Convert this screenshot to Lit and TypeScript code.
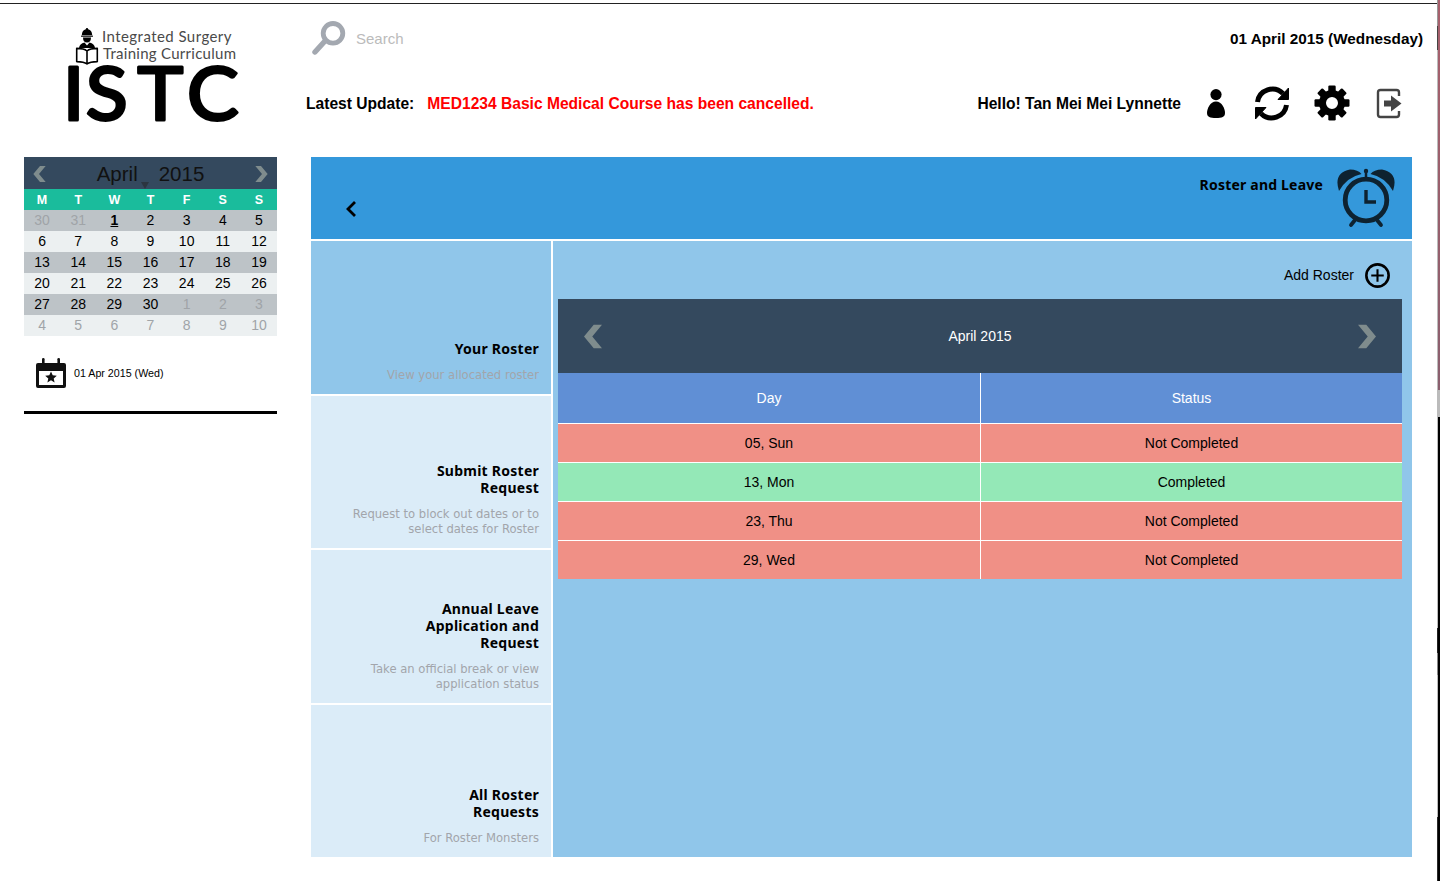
import { LitElement, html, svg, css } from 'lit';
import { customElement } from 'lit/decorators.js';

interface MenuItem {
  title: string[];
  sub: string[];
  active?: boolean;
}

const MENU: MenuItem[] = [
  { title: ['Your Roster'], sub: ['View your allocated roster'], active: true },
  { title: ['Submit Roster', 'Request'], sub: ['Request to block out dates or to', 'select dates for Roster'] },
  { title: ['Annual Leave', 'Application and', 'Request'], sub: ['Take an official break or view', 'application status'] },
  { title: ['All Roster', 'Requests'], sub: ['For Roster Monsters'] },
];

const ROSTER = [
  { day: '05, Sun', done: false },
  { day: '13, Mon', done: true },
  { day: '23, Thu', done: false },
  { day: '29, Wed', done: false },
];

const WEEKDAYS = ['M', 'T', 'W', 'T', 'F', 'S', 'S'];

// muted days lead/trail the month
const CAL_ROWS: { d: number; muted?: boolean; today?: boolean }[][] = [
  [{ d: 30, muted: true }, { d: 31, muted: true }, { d: 1, today: true }, { d: 2 }, { d: 3 }, { d: 4 }, { d: 5 }],
  [{ d: 6 }, { d: 7 }, { d: 8 }, { d: 9 }, { d: 10 }, { d: 11 }, { d: 12 }],
  [{ d: 13 }, { d: 14 }, { d: 15 }, { d: 16 }, { d: 17 }, { d: 18 }, { d: 19 }],
  [{ d: 20 }, { d: 21 }, { d: 22 }, { d: 23 }, { d: 24 }, { d: 25 }, { d: 26 }],
  [{ d: 27 }, { d: 28 }, { d: 29 }, { d: 30 }, { d: 1, muted: true }, { d: 2, muted: true }, { d: 3, muted: true }],
  [{ d: 4, muted: true }, { d: 5, muted: true }, { d: 6, muted: true }, { d: 7, muted: true }, { d: 8, muted: true }, { d: 9, muted: true }, { d: 10, muted: true }],
];

const chevron = (cls: string, flip = false) => html`
  <svg class=${cls} viewBox="0 0 37 48">
    <polygon
      fill="#7f8c8d"
      points=${flip ? '37,24 17,0 0,0 20,24 0,48 17,48' : '0,24 20,0 37,0 17,24 37,48 20,48'}
    ></polygon>
  </svg>
`;

const logo = html`
  <svg class="logo" viewBox="24 4 253 153">
    <g fill="#000">
      <path d="M87 28 q1.2 0 1.2 1.2 q3.6 .8 4 5.8 h-10.400 q.4 -5 4 -5.800 q0 -1.200 1.200 -1.200z"></path>
      <rect x="81" y="35.500" width="12" height="1.300" rx=".6"></rect>
      <path d="M83 37.500 h8 q0 5 -4 5 q-4 0 -4 -5z"></path>
      <path d="M79 48 q.5 -4.500 5.500 -5.500 l2.500 3 l2.500 -3 q5 1 5.500 5.500z"></path>
    </g>
    <path
      d="M87 51 q-3 -2.600 -10.300 -2.600 v13.200 q7.300 0 10.300 2.400 q3 -2.400 10.300 -2.400 v-13.200 q-7.300 0 -10.300 2.600z M87 51 v12.500"
      fill="#fff"
      stroke="#000"
      stroke-width="1.600"
      stroke-linejoin="round"
    ></path>
    <text class="logo-tag" x="102" y="42" textLength="129.500">Integrated Surgery</text>
    <text class="logo-tag" x="103" y="59" textLength="133">Training Curriculum</text>
    <text class="logo-mark" transform="scale(1.06 1)" x="59.300 81 129.700 176.400" y="120.500">ISTC</text>
  </svg>
`;

const searchIcon = html`
  <svg class="i-search" viewBox="0 0 36 36">
    <circle cx="22" cy="13.300" r="9.800" fill="none" stroke="#a3a8b0" stroke-width="4.800"></circle>
    <line x1="14" y1="21" x2="4" y2="32" stroke="#a3a8b0" stroke-width="5.400" stroke-linecap="round"></line>
  </svg>
`;

const personIcon = html`
  <svg class="i-person" viewBox="0 0 18 29">
    <circle cx="9" cy="5.600" r="5.600"></circle>
    <path d="M9 12.500 C3 12.500 0 20 0 24 C0 28 3 29 9 29 C15 29 18 28 18 24 C18 20 15 12.500 9 12.500Z"></path>
  </svg>
`;

const syncHalf = svg`
  <path d="M3.500 18 A 15 15 0 0 1 29 9.500" fill="none" stroke="#000" stroke-width="5"></path>
  <polygon points="34.500,4 34.500,15.500 24,15.500" fill="#000" stroke="#000" stroke-width="1" stroke-linejoin="round"></polygon>
`;

const syncIcon = html`
  <svg class="i-sync" viewBox="0 0 36 39">
    ${syncHalf}
    <g transform="rotate(180 18 19.500)">${syncHalf}</g>
  </svg>
`;

const gearIcon = html`
  <svg class="i-gear" viewBox="-18 -18 36 36">
    ${[0, 45, 90, 135, 180, 225, 270, 315].map(
      (a) => svg`<rect x="-3.700" y="-17.500" width="7.400" height="9" rx="1.200" transform="rotate(${a})"></rect>`,
    )}
    <circle r="9.500" fill="none" stroke="#000" stroke-width="7"></circle>
  </svg>
`;

const signOutIcon = html`
  <svg class="i-out" viewBox="0 0 26 31">
    <path
      d="M23 8 V4.500 Q23 2 20.500 2 H4.500 Q2 2 2 4.500 V26.500 Q2 29 4.500 29 H20.500 Q23 29 23 26.500 V23"
      fill="none"
      stroke="#444"
      stroke-width="2.400"
    ></path>
    <polygon points="8,12.500 15,12.500 15,7.500 25.500,15.500 15,23.500 15,18.500 8,18.500" fill="#444"></polygon>
  </svg>
`;

const clockIcon = html`
  <svg class="i-clock" viewBox="0 0 60 60">
    <g fill="#0e2230">
      <path d="M3 23 Q-3 5 14 1.500 Q22 1.500 25.500 6 Q11 9 3 23Z"></path>
      <path d="M57 23 Q63 5 46 1.500 Q38 1.500 34.500 6 Q49 9 57 23Z"></path>
      <circle cx="30" cy="3" r="2.200"></circle>
    </g>
    <g fill="none" stroke="#0e2230">
      <line x1="30" y1="3" x2="30" y2="10" stroke-width="2.500"></line>
      <circle cx="30" cy="32" r="20.800" stroke-width="4.800"></circle>
      <polyline points="30,22 30,34 40,34" stroke-width="3.400"></polyline>
      <line x1="19" y1="52" x2="15" y2="57" stroke-width="3.800" stroke-linecap="round"></line>
      <line x1="41" y1="52" x2="45" y2="57" stroke-width="3.800" stroke-linecap="round"></line>
    </g>
  </svg>
`;

const dateIcon = html`
  <svg class="i-date" viewBox="0 0 30 30">
    <path d="M2 5 H28 Q30 5 30 7 V28 Q30 30 28 30 H2 Q0 30 0 28 V7 Q0 5 2 5Z M3 13 V27 H27 V13Z" fill="#111" fill-rule="evenodd"></path>
    <rect x="6" y="0" width="2.600" height="7" rx="1.200" fill="#111"></rect>
    <rect x="21.400" y="0" width="2.600" height="7" rx="1.200" fill="#111"></rect>
    <polygon
      points="15,13.500 16.700,17.300 20.800,17.700 17.700,20.400 18.600,24.500 15,22.300 11.400,24.500 12.300,20.400 9.200,17.700 13.300,17.300"
      fill="#111"
    ></polygon>
  </svg>
`;

@customElement('app-root')
export class AppRoot extends LitElement {
  private renderCalendar() {
    return html`
      <div class="cal">
        <div class="cal-head">
          ${chevron('cal-chev')}
          <span class="cal-title"><span>April</span><span>2015</span></span>
          ${chevron('cal-chev', true)}
          <span class="cal-caret"></span>
        </div>
        <div class="cal-week">${WEEKDAYS.map((d) => html`<span>${d}</span>`)}</div>
        ${CAL_ROWS.map(
          (row) => html`
            <div class="cal-row">
              ${row.map(
                (c) => html`<span class="${c.muted ? 'muted' : ''} ${c.today ? 'today' : ''}">${c.d}</span>`,
              )}
            </div>
          `,
        )}
      </div>
    `;
  }

  private renderTable() {
    return html`
      <div class="table">
        <div class="table-month">
          ${chevron('table-chev')}
          <span>April 2015</span>
          ${chevron('table-chev', true)}
        </div>
        <div class="grid-row head">
          <div>Day</div>
          <div>Status</div>
        </div>
        ${ROSTER.map(
          (r) => html`
            <div class="grid-row ${r.done ? 'done' : 'todo'}">
              <div>${r.day}</div>
              <div>${r.done ? 'Completed' : 'Not Completed'}</div>
            </div>
          `,
        )}
      </div>
    `;
  }

  override render() {
    return html`
      <div class="window">
        <div class="rule"></div>
        <div class="layout">
          <aside class="side">
            ${logo} ${this.renderCalendar()}
            <div class="today-row">${dateIcon}<span>01 Apr 2015 (Wed)</span></div>
            <div class="side-line"></div>
          </aside>
          <main class="main">
            <header class="header">
              <div class="header-top">
                <div class="search">${searchIcon}<span>Search</span></div>
                <div class="bold">01 April 2015 (Wednesday)</div>
              </div>
              <div class="header-bottom">
                <span class="bold">Latest Update:</span>
                <span class="news">MED1234 Basic Medical Course has been cancelled.</span>
                <span class="bold hello">Hello! Tan Mei Mei Lynnette</span>
                ${personIcon} ${syncIcon} ${gearIcon} ${signOutIcon}
              </div>
            </header>
            <section class="panel">
              <div class="banner">
                <svg class="i-back" viewBox="0 0 12 18">
                  <polyline points="10,2 3,9 10,16" fill="none" stroke="#000" stroke-width="2.800"></polyline>
                </svg>
                <span class="banner-title">Roster and Leave</span>
                ${clockIcon}
              </div>
              <div class="split">
                <nav class="menu">
                  ${MENU.map(
                    (m) => html`
                      <div class="menu-item ${m.active ? 'active' : ''}">
                        <div class="menu-title">${m.title.map((t) => html`<div>${t}</div>`)}</div>
                        <div class="menu-sub">${m.sub.map((t) => html`<div>${t}</div>`)}</div>
                      </div>
                    `,
                  )}
                </nav>
                <div class="content">
                  <div class="add">
                    <span>Add Roster</span>
                    <svg class="i-add" viewBox="0 0 24 24">
                      <circle cx="12" cy="12" r="10.700" fill="none" stroke="#000" stroke-width="2.500"></circle>
                      <path d="M6 12 H18 M12 6 V18" stroke="#000" stroke-width="2"></path>
                    </svg>
                  </div>
                  ${this.renderTable()}
                </div>
              </div>
            </section>
          </main>
        </div>
      </div>
      <div class="edge"><i class="edge-in"></i><i class="edge-out"></i></div>
    `;
  }

  static override styles = css`
    :host {
      display: flex;
      width: 1440px;
      height: 881px;
      overflow: hidden;
      background: #fff;
      color: #000;
      font-family: 'Liberation Sans', Arial, sans-serif;
      font-size: 14px;
    }
    svg {
      display: block;
      flex: none;
    }
    .window {
      flex: 1;
      display: flex;
      flex-direction: column;
      min-width: 0;
    }
    .rule {
      height: 1px;
      margin-top: 3px;
      background: #222;
    }
    .layout {
      flex: 1;
      display: flex;
    }
    .edge {
      width: 3px;
      display: flex;
    }
    .edge-in {
      width: 1px;
      background: linear-gradient(
        #999 26px,
        #444 26px 50px,
        #bbb 50px 628px,
        #222 628px 653px,
        #888 653px 675px,
        #bbb 675px 817px,
        #2a2a2a 817px
      );
    }
    .edge-out {
      width: 2px;
      background: linear-gradient(#a8606c, #8a5f6e 390px, #bbb 390px 417px, #000 417px);
    }

    /* left column */
    .side {
      width: 306px;
      flex: none;
      padding-left: 24px;
      box-sizing: border-box;
    }
    .logo {
      width: 253px;
      height: 153px;
    }
    .logo-tag {
      font-family: Lato, sans-serif;
      font-size: 15px;
      fill: #4a4a4a;
    }
    .logo-mark {
      font-family: Lato, sans-serif;
      font-size: 73px;
      fill: #000;
      stroke: #000;
      stroke-width: 3px;
      stroke-linejoin: round;
    }
    .cal {
      width: 253px;
    }
    .cal-head {
      position: relative;
      height: 32px;
      padding: 1px 9px 0;
      box-sizing: border-box;
      background: #34495e;
      display: flex;
      align-items: center;
      justify-content: space-between;
    }
    .cal-chev {
      width: 13px;
      height: 16px;
    }
    .cal-title {
      display: flex;
      gap: 21px;
      font-size: 20.500px;
      color: #111;
    }
    .cal-caret {
      position: absolute;
      left: 117px;
      bottom: 0;
      border-left: 4px solid transparent;
      border-right: 4px solid transparent;
      border-top: 7px solid #2c3540;
    }
    .cal-week,
    .cal-row {
      display: grid;
      grid-template-columns: repeat(7, 1fr);
      height: 21px;
      line-height: 21px;
      text-align: center;
    }
    .cal-week {
      background: #1abc9c;
      color: #fff;
      font-size: 12.500px;
      font-weight: 700;
      line-height: 22px;
    }
    .cal-row {
      font-size: 14px;
      background: #ecf0f1;
    }
    .cal-row:nth-child(odd) {
      background: #bdc3c7;
    }
    .muted {
      color: #a0a4a8;
    }
    .today {
      font-weight: 700;
      text-decoration: underline;
    }
    .today-row {
      display: flex;
      align-items: center;
      gap: 8px;
      margin: 22px 0 23px 12px;
      font-size: 10.700px;
    }
    .i-date {
      width: 30px;
      height: 30px;
    }
    .side-line {
      width: 253px;
      height: 3px;
      background: #000;
    }

    /* header */
    .main {
      flex: 1;
      min-width: 0;
      display: flex;
      flex-direction: column;
    }
    .header {
      height: 153px;
      font-size: 15px;
    }
    .bold {
      font-weight: 700;
      padding-top: 2px;
    }
    .header-top {
      height: 68px;
      padding: 0 14px 0 5px;
      display: flex;
      align-items: center;
      justify-content: space-between;
    }
    .header-top .bold {
      font-size: 15.300px;
    }
    .search {
      display: flex;
      align-items: center;
      gap: 9px;
      color: #bbb;
    }
    .i-search {
      width: 36px;
      height: 36px;
    }
    .header-bottom {
      height: 62px;
      padding-right: 35px;
      display: flex;
      align-items: center;
      font-size: 15.600px;
    }
    .news {
      margin-left: 13px;
      padding-top: 2px;
      color: #f00;
      font-weight: 700;
    }
    .hello {
      margin-left: auto;
    }
    .i-person {
      width: 18px;
      height: 29px;
      margin-left: 26px;
    }
    .i-sync {
      width: 36px;
      height: 39px;
      margin-left: 29px;
    }
    .i-gear {
      width: 36px;
      height: 36px;
      margin-left: 24px;
    }
    .i-out {
      width: 26px;
      height: 31px;
      margin-left: 26px;
    }

    /* panel */
    .panel {
      flex: 1;
      margin: 0 25px 24px 5px;
      display: flex;
      flex-direction: column;
      gap: 2px;
      font-family: 'Noto Sans', sans-serif;
    }
    .banner {
      height: 82px;
      flex: none;
      background: #3498db;
      padding: 11px 16px 0 34px;
      box-sizing: border-box;
      display: flex;
      align-items: flex-start;
    }
    .i-back {
      width: 12px;
      height: 18px;
      margin-top: 32px;
    }
    .banner-title {
      margin-left: auto;
      margin-right: 13px;
      margin-top: 8px;
      font-size: 14px;
      font-weight: 700;
      letter-spacing: 0.2px;
      line-height: 17px;
    }
    .i-clock {
      width: 60px;
      height: 60px;
    }
    .split {
      flex: 1;
      display: flex;
      gap: 2px;
    }
    .menu {
      width: 240px;
      flex: none;
      display: grid;
      grid-template-rows: repeat(4, 1fr);
      gap: 2px;
    }
    .menu-item {
      background: #dbecf8;
      padding: 0 12px 11px 0;
      display: flex;
      flex-direction: column;
      justify-content: flex-end;
      text-align: right;
    }
    .menu-item.active {
      background: #90c6ea;
    }
    .menu-title {
      font-size: 14px;
      font-weight: 700;
      letter-spacing: 0.25px;
      line-height: 17px;
    }
    .menu-sub {
      margin-top: 11px;
      font-family: 'DejaVu Sans', sans-serif;
      font-size: 11.600px;
      line-height: 15px;
      color: #a2a5ab;
    }

    /* roster */
    .content {
      flex: 1;
      min-width: 0;
      background: #90c6ea;
      font-family: 'Liberation Sans', Arial, sans-serif;
    }
    .add {
      height: 48px;
      padding: 10px 22px 0 0;
      display: flex;
      align-items: center;
      justify-content: flex-end;
      gap: 11px;
    }
    .i-add {
      width: 25px;
      height: 25px;
    }
    .table {
      margin: 0 10px 0 5px;
    }
    .table-month {
      height: 74px;
      padding: 0 26px;
      background: #34495e;
      color: #fff;
      display: flex;
      align-items: center;
      justify-content: space-between;
    }
    .table-chev {
      width: 18px;
      height: 25px;
    }
    .grid-row {
      display: grid;
      grid-template-columns: 1fr 1fr;
      height: 39px;
      box-sizing: border-box;
      border-top: 1px solid #fff;
    }
    .grid-row > div {
      display: flex;
      align-items: center;
      justify-content: center;
    }
    .grid-row > div + div {
      border-left: 1px solid #fff;
    }
    .grid-row.head {
      height: 50px;
      border-top: 0;
      background: #608fd5;
      color: #fff;
    }
    .todo {
      background: #f09086;
    }
    .done {
      background: #94e8b7;
    }
  `;
}

declare global {
  interface HTMLElementTagNameMap {
    'app-root': AppRoot;
  }
}
